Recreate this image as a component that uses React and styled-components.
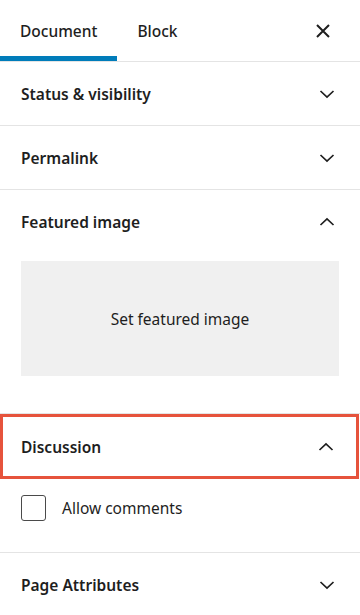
import React from "react";
import styled, { createGlobalStyle } from "styled-components";

const GlobalStyle = createGlobalStyle`
  body {
    margin: 0;
    background: #ffffff;
    font-family: "Noto Sans", "Open Sans", sans-serif;
    color: #1e1e1e;
  }
`;

const Sidebar = styled.div`
  width: 360px;
  background: #fff;
`;

const TabBar = styled.div`
  display: flex;
  align-items: stretch;
  height: 61px;
  border-bottom: 1px solid #e4e4e4;
`;

const Tab = styled.div`
  display: flex;
  align-items: center;
  padding: 0 20px;
  font-size: 15.5px;
  font-weight: 500;
  box-shadow: ${(p) => (p.active ? "inset 0 -5px 0 #007cba" : "none")};
`;

const CloseButton = styled.div`
  margin-left: auto;
  width: 24px;
  display: flex;
  align-items: center;
  justify-content: center;
  padding-right: 25px;
`;

const Panel = styled.div`
  border-bottom: 1px solid #e4e4e4;
`;

const PanelHeader = styled.div`
  display: flex;
  align-items: center;
  justify-content: space-between;
  box-sizing: border-box;
  font-size: 15.5px;
  font-weight: 600;
  height: 63px;
  padding: 0 25px 0 21px;
  border: ${(p) => (p.highlight ? "3px solid #e6533c" : "none")};
  ${(p) =>
    p.highlight &&
    `
    width: 359px;
    height: 65px;
    padding: 0 22px 0 18px;
  `}
`;

const PanelBody = styled.div`
  padding: ${(p) => p.pad || "0 21px 16px"};
`;

const ImageSlot = styled.div`
  height: 115px;
  background: #f0f0f0;
  display: flex;
  align-items: center;
  justify-content: center;
  font-size: 15.5px;
  color: #1e1e1e;
`;

const CheckRow = styled.label`
  display: flex;
  align-items: center;
  gap: 16px;
  font-size: 15.5px;
`;

const Box = styled.span`
  width: 25px;
  height: 26px;
  box-sizing: border-box;
  border: 1.5px solid #4a4a4a;
  border-radius: 3px;
`;

const Chevron = ({ up }) => (
  <svg width="16" height="10" viewBox="0 0 16 10">
    <polyline
      points={up ? "1.5,8 8,2 14.5,8" : "1.5,2 8,8 14.5,2"}
      fill="none"
      stroke="#1e1e1e"
      strokeWidth="1.7"
    />
  </svg>
);

const CloseIcon = () => (
  <svg width="14" height="14" viewBox="0 0 14 14">
    <path d="M1 1L13 13M13 1L1 13" stroke="#1e1e1e" strokeWidth="2" />
  </svg>
);

const Section = ({ title, open, highlight, children, pad }) => (
  <Panel>
    <PanelHeader highlight={highlight}>
      <span>{title}</span>
      <Chevron up={open} />
    </PanelHeader>
    {open && <PanelBody pad={pad}>{children}</PanelBody>}
  </Panel>
);

export default function App() {
  return (
    <Sidebar>
      <GlobalStyle />
      <TabBar>
        <Tab active>Document</Tab>
        <Tab>Block</Tab>
        <CloseButton>
          <CloseIcon />
        </CloseButton>
      </TabBar>
      <Section title="Status & visibility" />
      <Section title="Permalink" />
      <Section title="Featured image" open pad="8px 21px 37px">
        <ImageSlot>Set featured image</ImageSlot>
      </Section>
      <Section title="Discussion" open highlight pad="16px 21px 31px">
        <CheckRow>
          <Box />
          Allow comments
        </CheckRow>
      </Section>
      <Section title="Page Attributes" />
    </Sidebar>
  );
}
